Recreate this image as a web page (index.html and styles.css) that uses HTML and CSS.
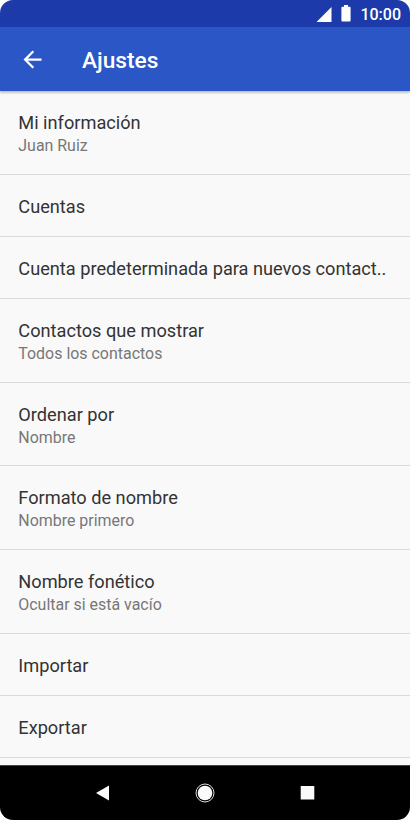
FILE: index.html
```html
<!DOCTYPE html>
<html lang="es">
<head>
<meta charset="utf-8">
<title>Ajustes</title>
<link rel="stylesheet" href="styles.css">
</head>
<body>
<div class="phone">
  <header class="status">
    <svg class="signal" viewBox="0 0 16 16"><path d="M15.500 0v15H.500z"/></svg>
    <svg class="battery" viewBox="0 0 10 17"><path d="M3 0h4v1.700h1.600q1 0 1 1V15.500q0 1-1 1H1.400q-1 0-1-1V2.700q0-1 1-1H3z"/></svg>
    <span class="time">10:00</span>
  </header>
  <div class="toolbar">
    <svg class="back" viewBox="0 0 24 24"><path d="M20 11H7.830l5.590-5.590L12 4l-8 8 8 8 1.410-1.410L7.830 13H20z"/></svg>
    <h1 class="title">Ajustes</h1>
  </div>
  <main class="list">
    <div class="row double"><span class="label">Mi información</span><span class="sub">Juan Ruiz</span></div>
    <div class="row"><span class="label">Cuentas</span></div>
    <div class="row"><span class="label">Cuenta predeterminada para nuevos contact..</span></div>
    <div class="row double"><span class="label">Contactos que mostrar</span><span class="sub">Todos los contactos</span></div>
    <div class="row double"><span class="label">Ordenar por</span><span class="sub">Nombre</span></div>
    <div class="row double"><span class="label">Formato de nombre</span><span class="sub">Nombre primero</span></div>
    <div class="row double"><span class="label">Nombre fonético</span><span class="sub">Ocultar si está vacío</span></div>
    <div class="row"><span class="label">Importar</span></div>
    <div class="row"><span class="label">Exportar</span></div>
  </main>
  <nav class="nav">
    <svg viewBox="0 0 20 20"><path d="M3 10 16 2.500v15z"/></svg>
    <svg viewBox="0 0 20 20"><circle cx="10" cy="10" r="7.300"/><circle class="ring" cx="10" cy="10" r="9"/></svg>
    <svg viewBox="0 0 20 20"><path d="M3.700 3h13.600v13.600H3.700z"/></svg>
  </nav>
</div>
</body>
</html>
```
FILE: styles.css
```css
body { margin: 0; background: #fff; font-family: Roboto, sans-serif; }
.phone { width: 410px; height: 820px; display: flex; flex-direction: column; overflow: hidden; border-radius: 13px; background: #f9f9f9; }
.status { height: 27px; flex: none; box-sizing: border-box; padding-right: 9px; display: flex; align-items: center; justify-content: flex-end; background: #1c3aa9; color: #fff; }
.signal { width: 16px; height: 16px; fill: #fff; margin: 2px 9px 0 0; }
.battery { width: 10px; height: 17px; fill: #fff; margin-right: 9px; }
.time { font-size: 16px; line-height: 27px; padding-top: 2px; font-weight: 500; }
.toolbar { height: 64px; flex: none; display: flex; align-items: center; background: #2a56c6; color: #fff; box-shadow: 0 2px 2px rgba(0,0,0,.22); z-index: 1; }
.back { width: 27px; height: 27px; margin-left: 18.500px; fill: #fff; }
.title { margin: 3px 0 0 36.500px; font-size: 22.700px; line-height: 28px; font-weight: 500; }
.list { flex: 1; min-height: 0; overflow: hidden; }
.row { height: 62.100px; box-sizing: border-box; padding: 3px 18.300px 0; border-bottom: 1px solid #dadada; display: flex; flex-direction: column; justify-content: center; white-space: nowrap; }
.double { height: 83.700px; padding-top: 3.400px; }
.label { font-size: 18.200px; line-height: 24px; color: #333; }
.sub { font-size: 15.950px; line-height: 22px; color: #777; }
.nav { height: 55px; flex: none; box-sizing: border-box; border-top: 1px solid #444; display: flex; justify-content: center; align-items: center; gap: 82px; background: #000; }
.nav svg { width: 20px; height: 20px; fill: #fafafa; }
.nav .ring { fill: none; stroke: #ddd; stroke-width: 1; }
```
